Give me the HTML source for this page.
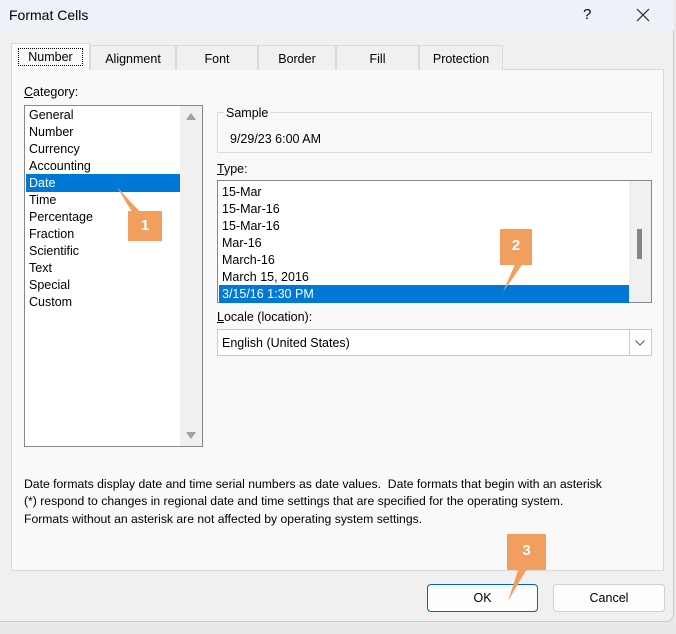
<!DOCTYPE html>
<html><head><style>
*{margin:0;padding:0;box-sizing:border-box}
body{width:676px;height:634px;background:#e9e9e9;font-family:"Liberation Sans",sans-serif;font-size:12px;color:#000;position:relative;overflow:hidden}
.a{position:absolute}
.win{left:0;top:0;width:674px;height:622px;background:#f0f0f0;border-right:1px solid #c8c8c8;border-bottom:1px solid #c8c8c8;border-radius:0 0 8px 0}
.title{left:0;top:0;width:674px;height:30px;background:#eef2f8}
.tab{top:45px;height:25px;border:1px solid #dadada;border-bottom:none;background:#f0f0f0;text-align:center;line-height:24px;font-size:12.5px}
.panel{left:11px;top:69px;width:653px;height:502px;background:#f9f9f9;border:1px solid #dadada}
.list{background:#fff;border:1px solid #828790}
.it{position:absolute;left:4px;font-size:12.5px;line-height:17px}
.sel{background:#0078d7;color:#fff}
.btn{top:584px;height:28px;border:1px solid #d0d0d0;border-radius:4px;background:#fdfdfd;text-align:center;line-height:26px;font-size:12.5px}
.co{background:#f29e5f;color:#fff;font-weight:bold;font-size:15px;text-align:center}
</style></head><body>
<div class="a win"></div>
<div class="a title"></div>
<div class="a" style="left:9px;top:7px;font-size:14px">Format Cells</div>
<div class="a" style="left:583px;top:6px;font-size:15px">?</div>
<svg class="a" style="left:636px;top:8px" width="14" height="14"><path d="M1 1L13 13M13 1L1 13" stroke="#222" stroke-width="1.2"/></svg>
<div class="a panel"></div>
<div class="a tab" style="left:11px;width:79px;top:43px;height:27px;background:#f9f9f9;z-index:2;line-height:27px"><span style="border:1px dotted #000;padding:1px 9px">Number</span></div>
<div class="a tab" style="left:90px;width:86px;line-height:26px">Alignment</div>
<div class="a tab" style="left:176px;width:82px;line-height:26px">Font</div>
<div class="a tab" style="left:258px;width:78px;line-height:26px">Border</div>
<div class="a tab" style="left:336px;width:83px;line-height:26px">Fill</div>
<div class="a tab" style="left:419px;width:84px;line-height:26px">Protection</div>

<div class="a" style="left:24px;top:85px;font-size:12.5px"><u>C</u>ategory:</div>
<div class="a list" style="left:24px;top:105px;width:179px;height:342px">
<div class="a" style="right:0;top:0;width:22px;height:340px;background:#f0f0f0"></div>
<svg class="a" style="right:6px;top:6px" width="10" height="8"><path d="M0 8L5 1L10 8Z" fill="#a0a0a0"/></svg>
<svg class="a" style="right:6px;bottom:6px" width="10" height="8"><path d="M0 0L5 7L10 0Z" fill="#a0a0a0"/></svg>
<div class="it" style="top:1px">General</div>
<div class="it" style="top:18px">Number</div>
<div class="it" style="top:35px">Currency</div>
<div class="it" style="top:52px">Accounting</div>
<div class="it sel" style="top:68px;left:1px;width:154px;padding-left:3px;padding-top:1px">Date</div>
<div class="it" style="top:86px">Time</div>
<div class="it" style="top:103px">Percentage</div>
<div class="it" style="top:120px">Fraction</div>
<div class="it" style="top:137px">Scientific</div>
<div class="it" style="top:154px">Text</div>
<div class="it" style="top:171px">Special</div>
<div class="it" style="top:188px">Custom</div>
</div>

<div class="a" style="left:217px;top:112px;width:435px;height:41px;border:1px solid #dcdcdc"></div>
<div class="a" style="left:224px;top:106px;background:#f9f9f9;padding:0 2px;font-size:12.5px">Sample</div>
<div class="a" style="left:230px;top:132px;font-size:12.5px">9/29/23 6:00 AM</div>

<div class="a" style="left:217px;top:162px;font-size:12.5px"><u>T</u>ype:</div>
<div class="a list" style="left:217px;top:180px;width:435px;height:123px">
<div class="a" style="right:0;top:0;width:22px;height:121px;background:#f0f0f0"></div>
<div class="a" style="right:9px;top:48px;width:5px;height:30px;background:#858585"></div>
<div class="it" style="top:3px">15-Mar</div>
<div class="it" style="top:20px">15-Mar-16</div>
<div class="it" style="top:37px">15-Mar-16</div>
<div class="it" style="top:54px">Mar-16</div>
<div class="it" style="top:71px">March-16</div>
<div class="it" style="top:88px">March 15, 2016</div>
<div class="it sel" style="top:104px;left:1px;width:410px;padding-left:3px;padding-top:1px">3/15/16 1:30 PM</div>
</div>

<div class="a" style="left:217px;top:310px;font-size:12.5px"><u>L</u>ocale (location):</div>
<div class="a" style="left:217px;top:329px;width:435px;height:27px;background:#fff;border:1px solid #c8c8c8">
<div class="a" style="left:4px;top:6px;font-size:12.5px">English (United States)</div>
<div class="a" style="right:0;top:0;width:22px;height:25px;border-left:1px solid #c8c8c8"></div>
<svg class="a" style="right:6px;top:10px" width="10" height="6"><path d="M0.5 0.5L5 5L9.5 0.5" stroke="#555" fill="none"/></svg>
</div>

<div class="a" style="left:24px;top:476px;font-size:12.2px;line-height:17.3px;width:650px;white-space:nowrap">Date formats display date and time serial numbers as date values.&nbsp; Date formats that begin with an asterisk<br>(*) respond to changes in regional date and time settings that are specified for the operating system.<br>Formats without an asterisk are not affected by operating system settings.</div>

<div class="a btn" style="left:427px;width:111px;border-color:#0067c0">OK</div>
<div class="a btn" style="left:553px;width:112px">Cancel</div>

<svg class="a" style="left:0;top:0" width="676" height="634">
<path d="M117 187L140 212L132 212Z" fill="#f29e5f"/>
<path d="M503 292L516 262L524 262Z" fill="#f29e5f"/>
<path d="M508 601L519 567L528 567Z" fill="#f29e5f"/>
</svg>
<div class="a co" style="left:128px;top:211px;width:34px;height:30px;line-height:30px">1</div>
<div class="a co" style="left:500px;top:229px;width:32px;height:36px;line-height:34px">2</div>
<div class="a co" style="left:507px;top:534px;width:39px;height:36px;line-height:34px">3</div>
</body></html>
